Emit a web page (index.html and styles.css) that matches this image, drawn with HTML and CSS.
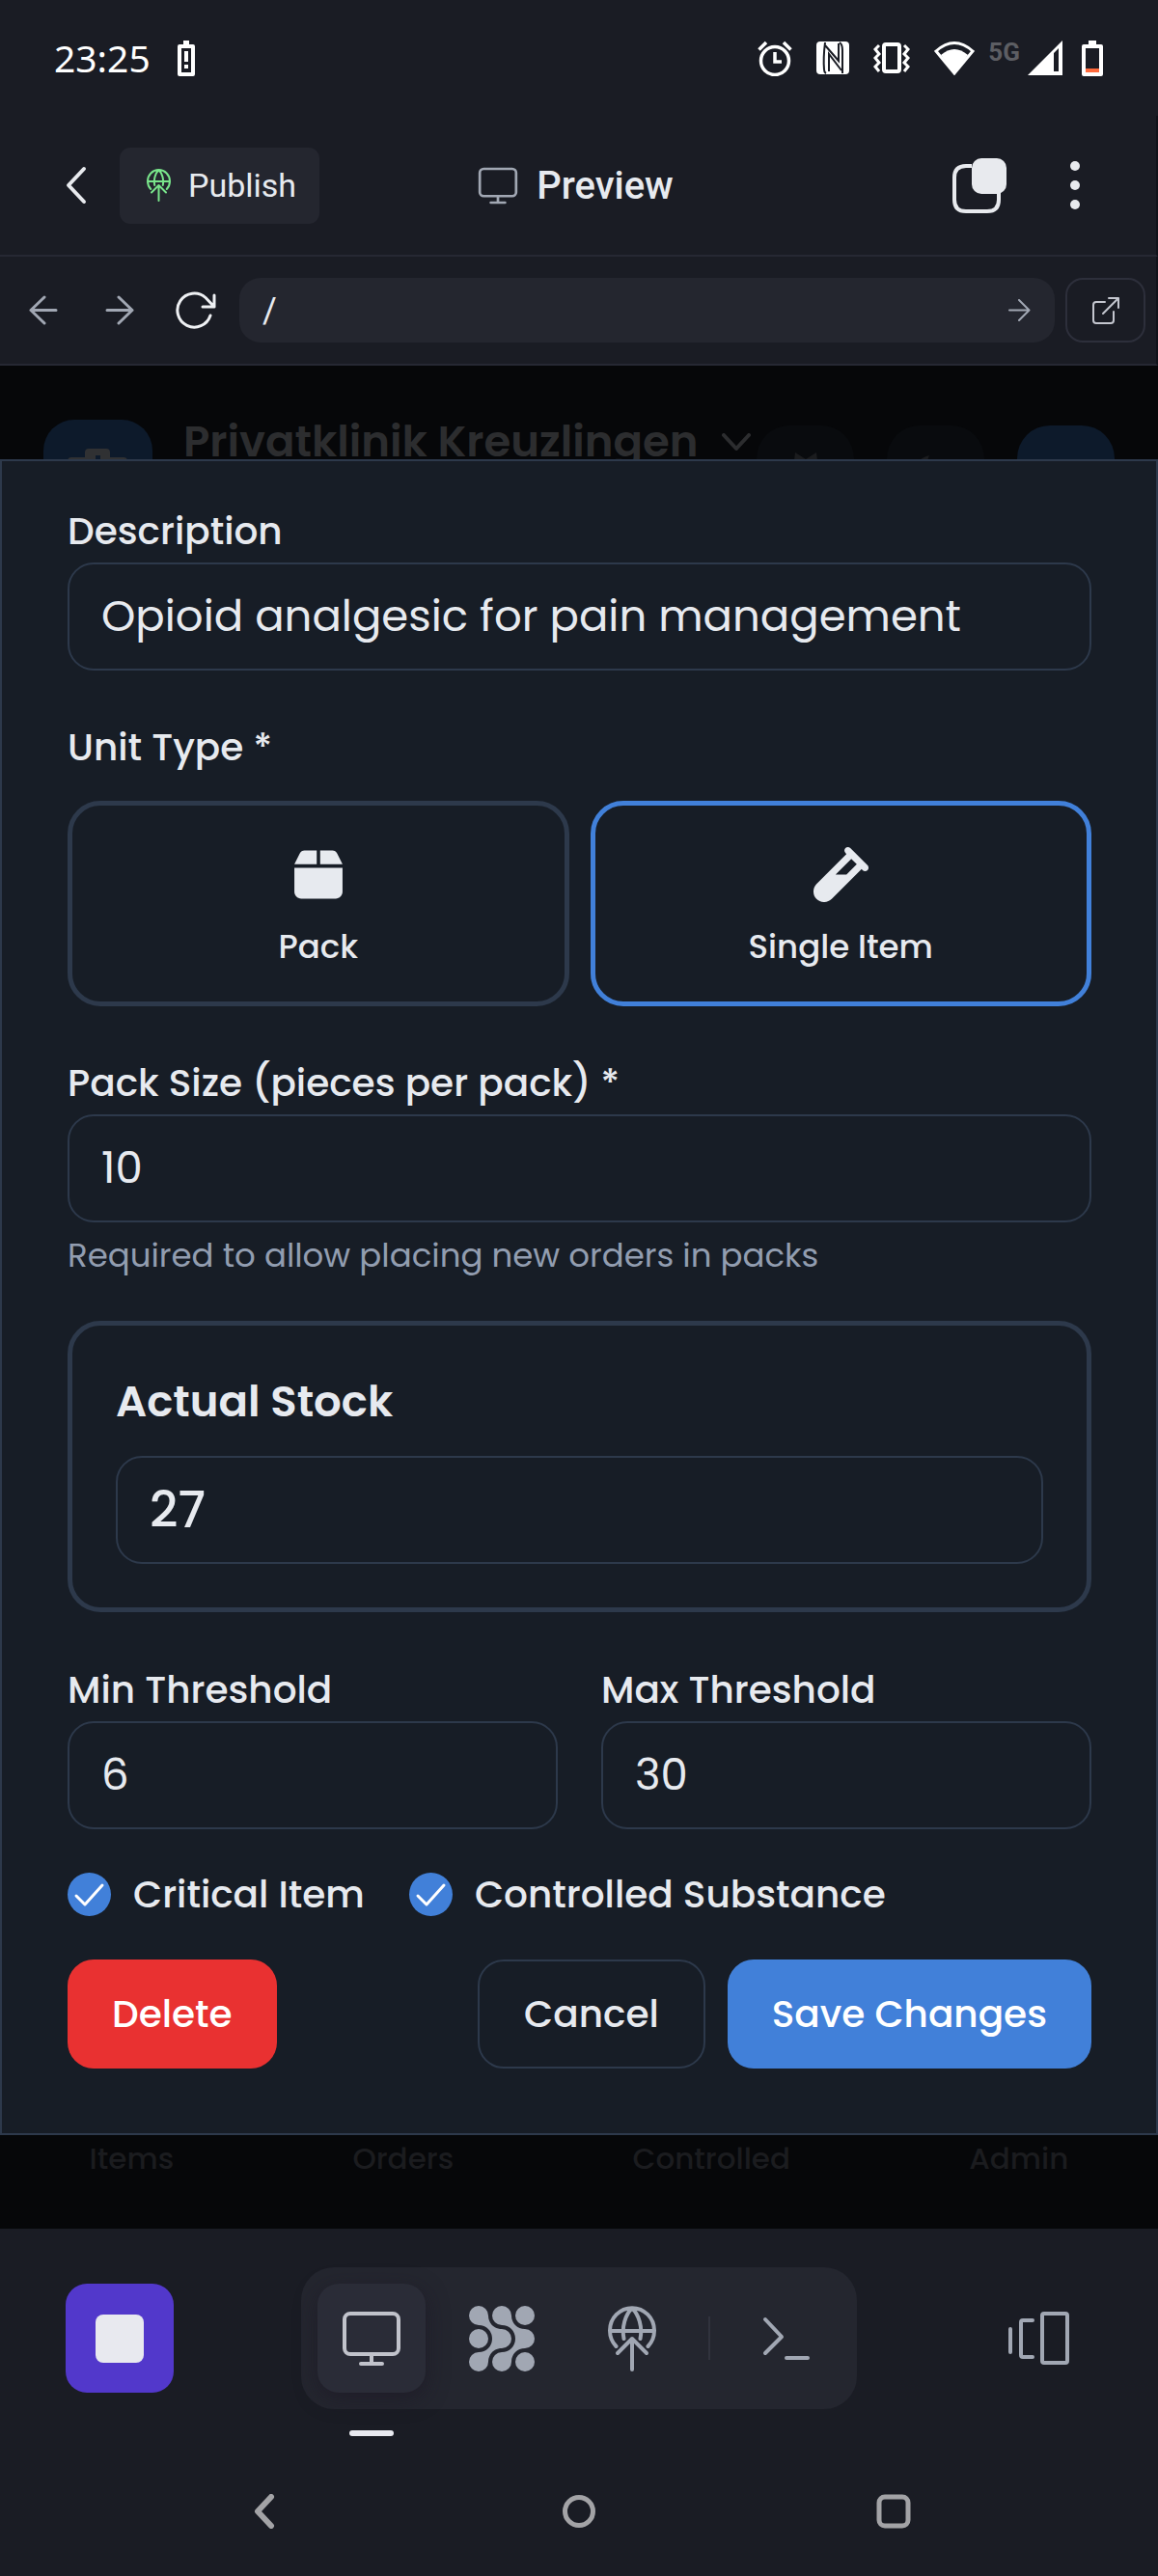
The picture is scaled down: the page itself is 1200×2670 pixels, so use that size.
FILE: index.html
```html
<!DOCTYPE html>
<html lang="en">
<head>
<meta charset="utf-8">
<meta name="viewport" content="width=device-width, initial-scale=1">
<title>Preview</title>
<link rel="stylesheet" href="styles.css">
</head>
<body>
<svg class="defs" aria-hidden="true">
  <symbol id="globe-up" viewBox="0 0 50 68">
    <g fill="none" stroke="currentColor" stroke-width="4" stroke-linecap="round" stroke-linejoin="round">
      <path d="M8.500 42A23 23.500 0 1 1 41.500 42M2 26H48M16.500 34C14 22 18 9 25 2.500C32 9 36 22 33.500 34"/>
      <path d="M25 66V34M10 49L25 34L40 49"/>
    </g>
  </symbol>
  <symbol id="monitor" viewBox="0 0 62 58">
    <g fill="none" stroke="currentColor" stroke-width="4" stroke-linecap="round">
      <rect x="3" y="3" width="56" height="42" rx="6"/><path d="M31 45V54M20 55H42"/>
    </g>
  </symbol>
</svg>

<div class="status">
  <span class="clock">23:25</span>
  <svg class="status-alert" width="18" height="37" viewBox="0 0 18 37"><path fill="#fff" fill-rule="evenodd" d="M6 0h6v4h4q2 0 2 2v29q0 2-2 2H2q-2 0-2-2V6q0-2 2-2h4zM4 8v25h10V8z"/><path fill="#fff" d="M7 11h4v11H7zM7 25h4v4H7z"/></svg>
  <div class="status-icons">
    <svg width="36" height="37" viewBox="0 0 36 37" fill="none" stroke="#fff" stroke-width="3.500"><circle cx="18" cy="21" r="14.500"/><path d="M18 12v10h7M1.500 9.500L9 2M34.500 9.500L27 2"/></svg>
    <svg width="34" height="34" viewBox="0 0 34 34"><rect width="34" height="34" rx="4" fill="#fff"/><path d="M9 1Q7 17 8 29Q8 32 10 33M24 1Q27 3 27 9V33M9 4L23 20V2M13 31V13L26 30" stroke="#1a1c24" stroke-width="2" fill="none"/></svg>
    <svg width="38" height="34" viewBox="0 0 38 34" fill="none" stroke="#fff"><rect x="11" y="3" width="16" height="28" rx="2" stroke-width="4"/><path stroke-width="3" d="M6 4L2 8l4 5-4 4 4 5-4 4 4 5M32 4l4 4-4 5 4 4-4 5 4 4-4 5"/></svg>
    <svg width="42" height="36" viewBox="0 0 42 36"><path d="M2 11Q21-6 40 11L21 34z" fill="none" stroke="#fff" stroke-width="3"/><path d="M7 15Q21 3 35 15L21 34z" fill="#fff"/></svg>
    <span class="network">5G</span>
    <svg width="36" height="36" viewBox="0 0 36 36"><path fill="#fff" fill-rule="evenodd" d="M36 0V36H0zM27 13V32H32V8z"/></svg>
    <svg class="battery" width="22" height="37" viewBox="0 0 22 37"><path fill="#fff" fill-rule="evenodd" d="M7 0h8v4h5q2 0 2 2v29q0 2-2 2H2q-2 0-2-2V6q0-2 2-2h5zM4 8v22h14V8z"/><path fill="#ff6a3c" d="M4 29h14v4H4z"/></svg>
  </div>
</div>

<header class="header">
  <div class="header-left">
    <button class="icon-button" aria-label="Back"><svg width="22" height="40" viewBox="0 0 22 40" fill="none" stroke="#e8eaee" stroke-width="4" stroke-linecap="round" stroke-linejoin="round"><path d="M19 3L3 20L19 37"/></svg></button>
    <button class="publish"><svg class="publish-icon" width="25" height="34"><use href="#globe-up"/></svg>Publish</button>
  </div>
  <h1 class="header-title"><svg class="muted" width="42" height="39"><use href="#monitor"/></svg>Preview</h1>
  <div class="header-right">
    <button class="icon-button" aria-label="Windows"><svg width="56" height="57" viewBox="0 0 56 57"><path d="M20 8H14Q2 8 2 20V43Q2 55 14 55H36Q48 55 48 43V36" fill="none" stroke="#e8eaee" stroke-width="4"/><rect x="20" y="0" width="36" height="37" rx="10" fill="#e8eaee"/></svg></button>
    <button class="icon-button" aria-label="More"><svg width="12" height="52" viewBox="0 0 12 52" fill="#e8eaee"><circle cx="6" cy="6" r="5"/><circle cx="6" cy="26" r="5"/><circle cx="6" cy="46" r="5"/></svg></button>
  </div>
</header>

<nav class="toolbar" aria-label="Page navigation">
  <button class="icon-button muted" aria-label="Previous page"><svg width="30" height="31" viewBox="0 0 30 31" fill="none" stroke="currentColor" stroke-width="3" stroke-linecap="round" stroke-linejoin="round"><path d="M28 15.500H2M16 2L2 15.500L16 29"/></svg></button>
  <button class="icon-button muted" aria-label="Next page"><svg width="30" height="31" viewBox="0 0 30 31" fill="none" stroke="currentColor" stroke-width="3" stroke-linecap="round" stroke-linejoin="round"><path d="M2 15.500H28M14 2L28 15.500L14 29"/></svg></button>
  <button class="icon-button" aria-label="Reload"><svg width="42" height="39" viewBox="0 0 42 39" fill="none" stroke="#eef0f3" stroke-width="3" stroke-linecap="round" stroke-linejoin="round"><path d="M36 25A17.500 17.500 0 1 1 31 6.500L40 16M40 4V16H28"/></svg></button>
  <div class="address">
    <input class="address-input" type="text" value="/" aria-label="Path">
    <button class="address-go muted" aria-label="Go"><svg width="23" height="23" viewBox="0 0 23 23" fill="none" stroke="currentColor" stroke-width="2" stroke-linecap="round" stroke-linejoin="round"><path d="M1 11.500H21M11 1L21.500 11.500L11 22"/></svg></button>
  </div>
  <button class="external" aria-label="Open in new tab"><svg width="30" height="30" viewBox="0 0 30 30" fill="none" stroke="#c4c6cf" stroke-width="2" stroke-linecap="round" stroke-linejoin="round"><path d="M14 6H5Q2 6 2 9V25Q2 28 5 28H20Q23 28 23 25V16M18 2H28V12M28 2L12 18"/></svg></button>
</nav>

<main class="stage">
  <div class="app">
    <div class="app-header">
      <svg class="app-logo" width="113" height="113" viewBox="0 0 113 113"><rect width="113" height="113" rx="32" fill="#0d1a2b"/><path fill="#303133" fill-rule="evenodd" d="M25 43q0-4 4-4h14V34q0-4 4-4h18q4 0 4 4v5h14q4 0 4 4v34H25zM54 37v4h-4v5h4v4h5v-4h4v-5h-4v-4z"/></svg>
      <button class="clinic">Privatklinik Kreuzlingen<svg width="30" height="19" viewBox="0 0 30 19" fill="none" stroke="currentColor" stroke-width="4" stroke-linecap="round" stroke-linejoin="round"><path d="M2 2L15 16L28 2"/></svg></button>
      <div class="app-actions">
        <button class="round" aria-label="Light theme"><svg width="58" height="58" viewBox="0 0 58 58" fill="#1b1c1e"><path d="M18 0L29 7L40 0L42 16L58 18L51 29L58 40L42 42L40 58L29 51L18 58L16 42L0 40L7 29L0 18L16 16z"/></svg></button>
        <button class="round" aria-label="Dark theme"><svg width="46" height="52" viewBox="0 0 46 52" fill="#1b1c1e"><path d="M16 0A25 26 0 1 0 44 36A25 25 0 0 1 16 0z"/></svg></button>
        <button class="round round-blue" aria-label="Account"></button>
      </div>
    </div>
    <nav class="app-tabs" aria-label="Sections"><a href="#items">Items</a><a href="#orders">Orders</a><a href="#controlled">Controlled</a><a href="#admin">Admin</a></nav>
  </div>

  <form class="modal" role="dialog" aria-label="Edit item">
    <div class="field">
      <label class="label" for="description">Description</label>
      <input class="input" id="description" type="text" value="Opioid analgesic for pain management">
    </div>

    <fieldset class="field units">
      <legend class="label">Unit Type *</legend>
      <div class="unit-grid">
        <label class="unit"><input class="unit-radio" type="radio" name="unit"><svg width="50" height="57" viewBox="0 0 448 512" fill="currentColor"><path d="M50.700 58.500L0 160H208V32H93.700C75.500 32 58.900 42.300 50.700 58.500zM240 160H448L397.300 58.500C389.100 42.300 372.500 32 354.300 32H240V160zM448 192H0V416c0 35.300 28.700 64 64 64H384c35.300 0 64-28.700 64-64V192z"/></svg>Pack</label>
        <label class="unit"><input class="unit-radio" type="radio" name="unit" checked><svg width="57" height="57" viewBox="0 0 512 512" fill="currentColor"><path d="M342.600 9.400c-12.500-12.500-32.800-12.500-45.300 0s-12.500 32.800 0 45.300l9.400 9.400L28.100 342.600C10.100 360.600 0 385 0 410.500V416c0 53 43 96 96 96h5.500c25.500 0 49.900-10.100 67.900-28.100L448 205.300l9.400 9.400c12.500 12.500 32.800 12.500 45.300 0s12.500-32.800 0-45.300l-32-32-96-96-32-32zM205.300 256L352 109.300 402.700 160l-96 96H205.300z"/></svg>Single Item</label>
      </div>
    </fieldset>

    <div class="field field-helped">
      <label class="label" for="pack-size">Pack Size (pieces per pack) *</label>
      <input class="input" id="pack-size" type="text" inputmode="numeric" value="10" aria-describedby="pack-help">
      <p class="help" id="pack-help">Required to allow placing new orders in packs</p>
    </div>

    <div class="stock">
      <label class="stock-label" for="stock">Actual Stock</label>
      <input class="input input-strong" id="stock" type="text" inputmode="numeric" value="27">
    </div>

    <div class="thresholds">
      <div>
        <label class="label" for="min">Min Threshold</label>
        <input class="input" id="min" type="text" inputmode="numeric" value="6">
      </div>
      <div>
        <label class="label" for="max">Max Threshold</label>
        <input class="input" id="max" type="text" inputmode="numeric" value="30">
      </div>
    </div>

    <div class="checks">
      <label class="check"><span class="check-box"><input type="checkbox" checked><svg width="45" height="45" viewBox="0 0 45 45" fill="none" stroke="#fff" stroke-width="3" stroke-linecap="round" stroke-linejoin="round"><path d="M9 24L18 33L36 13"/></svg></span>Critical Item</label>
      <label class="check"><span class="check-box"><input type="checkbox" checked><svg width="45" height="45" viewBox="0 0 45 45" fill="none" stroke="#fff" stroke-width="3" stroke-linecap="round" stroke-linejoin="round"><path d="M9 24L18 33L36 13"/></svg></span>Controlled Substance</label>
    </div>

    <div class="actions">
      <button class="button button-danger" type="button">Delete</button>
      <button class="button button-outline" type="button">Cancel</button>
      <button class="button button-primary" type="button">Save Changes</button>
    </div>
  </form>
</main>

<div class="dock">
  <button class="stop" aria-label="Stop"><span class="stop-mark"></span></button>
  <div class="dock-pill">
    <button class="dock-button dock-active" aria-label="Preview"><svg width="62" height="58"><use href="#monitor"/></svg></button>
    <button class="dock-button" aria-label="Agent"><svg width="68" height="68" viewBox="0 0 68 68" fill="currentColor">
      <circle cx="10" cy="10" r="10"/><circle cx="34" cy="10" r="10"/><circle cx="58" cy="10" r="10"/>
      <circle cx="10" cy="34" r="10"/><circle cx="34" cy="34" r="10"/><circle cx="58" cy="34" r="10"/>
      <circle cx="10" cy="58" r="10"/><circle cx="34" cy="58" r="10"/><circle cx="58" cy="58" r="10"/>
      <path d="M20 10C20 18 26 24 34 24V34H24C24 26 18 20 10 20V10zM44 10C44 18 50 24 58 24V34H48C48 26 42 20 34 20V10zM20 58C20 50 26 44 34 44V34H24C24 42 18 48 10 48V58zM44 58C44 50 50 44 58 44V34H48C48 42 42 48 34 48V58z"/></svg></button>
    <button class="dock-button" aria-label="Publish"><svg width="50" height="68"><use href="#globe-up"/></svg></button>
    <span class="dock-divider"></span>
    <button class="dock-button" aria-label="Terminal"><svg width="50" height="46" viewBox="0 0 50 46" fill="none" stroke="currentColor" stroke-width="4" stroke-linecap="round" stroke-linejoin="round"><path d="M3 3L20 21L3 38M25 43H47"/></svg></button>
  </div>
  <button class="dock-button dock-end" aria-label="Panels"><svg width="65" height="58" viewBox="0 0 65 58" fill="none" stroke="currentColor" stroke-width="4" stroke-linecap="round" stroke-linejoin="round"><rect x="36" y="3" width="26" height="51" rx="2"/><path d="M26 10H16Q14 10 14 12V46Q14 48 16 48H26M3 19V43"/></svg></button>
</div>

<nav class="system" aria-label="System">
  <button class="icon-button" aria-label="Back"><svg width="24" height="36" viewBox="0 0 24 36" fill="none" stroke="#a3a3a6" stroke-width="6" stroke-linecap="round" stroke-linejoin="round"><path d="M19 3L5 18L19 33"/></svg></button>
  <button class="icon-button" aria-label="Home"><svg width="36" height="36" viewBox="0 0 36 36" fill="none" stroke="#a3a3a6" stroke-width="5"><circle cx="18" cy="18" r="14.500"/></svg></button>
  <button class="icon-button" aria-label="Recents"><svg width="36" height="36" viewBox="0 0 36 36" fill="none" stroke="#a3a3a6" stroke-width="5"><rect x="3" y="3" width="30" height="30" rx="6"/></svg></button>
</nav>
</body>
</html>
```
FILE: styles.css
```css
:root {
  --chrome: #1a1c24;
  --raised: #24262f;
  --muted: #a1a7b3;
  --panel: #171d26;
  --line: #2d394b;
  --text: #e7eaef;
  --blue: #4180d9;
}

* { box-sizing: border-box; }

body {
  margin: 0;
  background: var(--chrome);
  color: var(--text);
  font-family: Roboto, "Noto Sans", sans-serif;
}

button, input { font: inherit; color: inherit; }
button { border: 0; padding: 0; background: none; }
svg { display: block; flex: none; }
.defs { position: absolute; width: 0; height: 0; }
.muted { color: var(--muted); }

.icon-button {
  display: flex;
  align-items: center;
  justify-content: center;
  width: 68px;
  height: 68px;
}

/* Phone status bar */
.status {
  display: flex;
  align-items: center;
  height: 120px;
  padding: 0 57px 0 56px;
  color: #fff;
}
.clock { font: 39px/48px "Noto Sans", sans-serif; }
.status-alert { margin-left: 28px; }
.status-icons {
  display: flex;
  align-items: center;
  gap: 25px;
  margin-left: auto;
}
.network {
  align-self: flex-start;
  margin: 0 -17px 0 -11px;
  font-size: 26px;
  line-height: 24px;
  font-weight: 700;
  color: #5d5e63;
}
.battery { margin-left: -5px; }

/* Header */
.header {
  display: grid;
  grid-template-columns: 1fr auto 1fr;
  align-items: center;
  height: 146px;
  padding: 0 50px 0 45px;
  border-right: 2px solid #101219;
  border-bottom: 2px solid #262833;
}
.header-left { display: flex; align-items: center; gap: 11px; }
.header-right { display: flex; justify-content: flex-end; gap: 31px; }
.publish {
  display: flex;
  align-items: center;
  gap: 18px;
  height: 79px;
  padding: 0 24px 0 28px;
  border-radius: 11px;
  background: var(--raised);
  font-size: 34px;
}
.publish-icon { color: #79e58b; }
.header-title {
  display: flex;
  align-items: center;
  gap: 19px;
  margin: 0;
  font-size: 40px;
  font-weight: 500;
}

/* Browser toolbar */
.toolbar {
  display: flex;
  align-items: center;
  gap: 11px;
  height: 113px;
  padding: 0 11px;
  border-right: 2px solid #101219;
  border-bottom: 2px solid #262833;
}
.address {
  display: flex;
  flex: 1;
  align-items: center;
  height: 67px;
  padding: 0 25px 0 24px;
  border-radius: 22px;
  background: var(--raised);
}
.address-input {
  flex: 1;
  min-width: 0;
  border: 0;
  padding: 0;
  background: none;
  font-size: 36px;
}
.external {
  display: flex;
  align-items: center;
  justify-content: center;
  width: 83px;
  height: 67px;
  border: 2px solid #2d2f3b;
  border-radius: 18px;
}

/* Dimmed app with the dialog in the same grid cell */
.stage {
  display: grid;
  font-family: Poppins, Inter, sans-serif;
}
.app, .modal { grid-area: 1 / 1; min-width: 0; }
.app {
  display: flex;
  flex-direction: column;
  justify-content: space-between;
  background: #060709;
}
.app-header {
  display: flex;
  align-items: flex-start;
  padding: 56px 45px;
}
.clinic {
  display: flex;
  align-items: center;
  gap: 24px;
  margin-left: 32px;
  color: #2c2d2f;
  font-size: 45px;
  line-height: 46px;
  font-weight: 600;
}
.app-actions { display: flex; gap: 34px; margin: 6px 0 0 auto; }
.round {
  display: flex;
  align-items: center;
  justify-content: center;
  width: 101px;
  height: 113px;
  border-radius: 34px;
  background: #090b0e;
}
.round-blue { background: #0d1a2b; }
.app-tabs {
  display: flex;
  justify-content: space-around;
  padding-bottom: 54px;
  font-size: 31px;
  line-height: 38px;
  font-weight: 500;
}
.app-tabs a { color: #1b1c1f; text-decoration: none; }

.modal {
  margin: 97px 0;
  padding: 49px 67px 67px 68px;
  border: 2px solid var(--line);
  background: var(--panel);
}
.field { margin: 0 0 56px; border: 0; padding: 0; }
.field-helped { margin-bottom: 44px; }
.label {
  display: block;
  margin-bottom: 8px;
  padding: 0;
  font-size: 39px;
  line-height: 48px;
  font-weight: 500;
}
.input {
  display: block;
  width: 100%;
  height: 112px;
  padding: 0 33px;
  border: 2px solid var(--line);
  border-radius: 27px;
  background: transparent;
  font-size: 45px;
}
.input-strong { font-size: 51px; font-weight: 500; }
.help {
  margin: 10px 0 0;
  color: #929db0;
  font-size: 34px;
  line-height: 48px;
}

.units .label { margin-bottom: 31px; }
.unit-grid {
  display: grid;
  grid-template-columns: 1fr 1fr;
  gap: 22px;
}
.unit {
  display: flex;
  flex-direction: column;
  align-items: center;
  gap: 26px;
  height: 213px;
  padding-top: 43px;
  border: 5px solid var(--line);
  border-radius: 34px;
  font-size: 34px;
  line-height: 40px;
  font-weight: 500;
}
.unit:has(:checked) { border-color: var(--blue); }
.unit-radio { position: absolute; margin: 0; opacity: 0; }

.stock {
  margin-bottom: 57px;
  padding: 45px;
  border: 5px solid var(--line);
  border-radius: 34px;
}
.stock-label {
  display: block;
  margin-bottom: 22px;
  font-size: 45px;
  line-height: 68px;
  font-weight: 600;
}

.thresholds {
  display: grid;
  grid-template-columns: 1fr 1fr;
  gap: 45px;
}
.checks { display: flex; gap: 46px; margin: 45px 0; }
.check {
  display: flex;
  align-items: center;
  gap: 23px;
  font-size: 39px;
  line-height: 45px;
  font-weight: 500;
}
.check-box { display: grid; }
.check-box > * { grid-area: 1 / 1; }
.check-box input {
  appearance: none;
  width: 45px;
  height: 45px;
  margin: 0;
  border-radius: 50%;
  background: var(--blue);
}
.check-box svg { pointer-events: none; }

.actions { display: flex; gap: 23px; }
.button {
  height: 113px;
  padding: 0 46px;
  border-radius: 27px;
  color: #fff;
  font-size: 39px;
  font-weight: 500;
}
.button-danger { margin-right: auto; background: #e93131; }
.button-outline { border: 2px solid var(--line); color: var(--text); }
.button-primary { background: var(--blue); }

/* Dock */
.dock {
  display: grid;
  grid-template-columns: 1fr auto 1fr;
  align-items: center;
  padding: 40px 68px 33px;
}
.stop {
  display: flex;
  align-items: center;
  justify-content: center;
  width: 112px;
  height: 113px;
  border-radius: 22px;
  background: #5238cb;
}
.stop-mark {
  width: 50px;
  height: 50px;
  border-radius: 8px;
  background: #e8e9ef;
}
.dock-pill {
  display: flex;
  align-items: center;
  gap: 23px;
  padding: 17px;
  border-radius: 34px;
  background: var(--raised);
}
.dock-button {
  display: flex;
  align-items: center;
  justify-content: center;
  width: 112px;
  height: 113px;
  border-radius: 22px;
  color: var(--muted);
}
.dock-active {
  position: relative;
  background: #2a2c37;
  color: #c1c3cb;
  box-shadow: 0 6px 22px rgba(26, 20, 34, 0.5);
}
.dock-active::after {
  content: "";
  position: absolute;
  left: 33px;
  bottom: -45px;
  width: 46px;
  height: 6px;
  border-radius: 3px;
  background: #e8e9ef;
}
.dock-divider { width: 2px; height: 45px; background: #31333e; }
.dock-end { justify-self: end; }

/* System navigation */
.system {
  display: flex;
  justify-content: center;
  gap: 258px;
  padding: 39px 0 32px;
}
```
